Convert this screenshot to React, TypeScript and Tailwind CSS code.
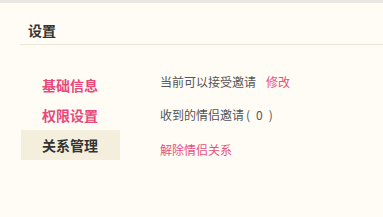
import { useState } from 'react';

const navItems = ['基础信息', '权限设置', '关系管理'];

const App = () => {
  const [active, setActive] = useState('关系管理');

  return (
    <div className="w-[383px] h-[217px] bg-[#fffcf5] overflow-hidden font-['Noto_Sans_CJK_SC',sans-serif]">
      <div className="h-[3px] bg-[#e9e8e4]" />
      <div className="ml-[20px] pt-[17px] pb-[4px] border-b border-[#ece6d6]">
        <h1 className="pl-[8px] text-[14px] leading-[20px] font-semibold text-[#333]">设置</h1>
      </div>

      <div className="flex mt-[25px]">
        <ul className="ml-[21px] w-[99px]">
          {navItems.map((item) => (
            <li
              key={item}
              onClick={() => setActive(item)}
              className={
                active === item
                  ? 'h-[30px] pl-[21px] flex items-center text-[14px] font-bold text-[#333] bg-[#f4efdc] cursor-pointer'
                  : 'h-[30px] pl-[21px] flex items-center text-[14px] font-bold text-[#e8487a] cursor-pointer'
              }
            >
              {item}
            </li>
          ))}
        </ul>

        <div className="ml-[40px] text-[12px] text-[#555]">
          <p className="leading-[23px]">
            当前可以接受邀请
            <a className="ml-[10px] text-[#e8507e] cursor-pointer">修改</a>
          </p>
          <p className="leading-[23px] mt-[10px]">
            收到的情侣邀请<span className="ml-[2px]">(</span>
            <span className="mx-[6px]">0</span>)
          </p>
          <p className="leading-[23px] mt-[12px]">
            <a className="text-[#e8507e] cursor-pointer">解除情侣关系</a>
          </p>
        </div>
      </div>
    </div>
  );
};

export default App;
